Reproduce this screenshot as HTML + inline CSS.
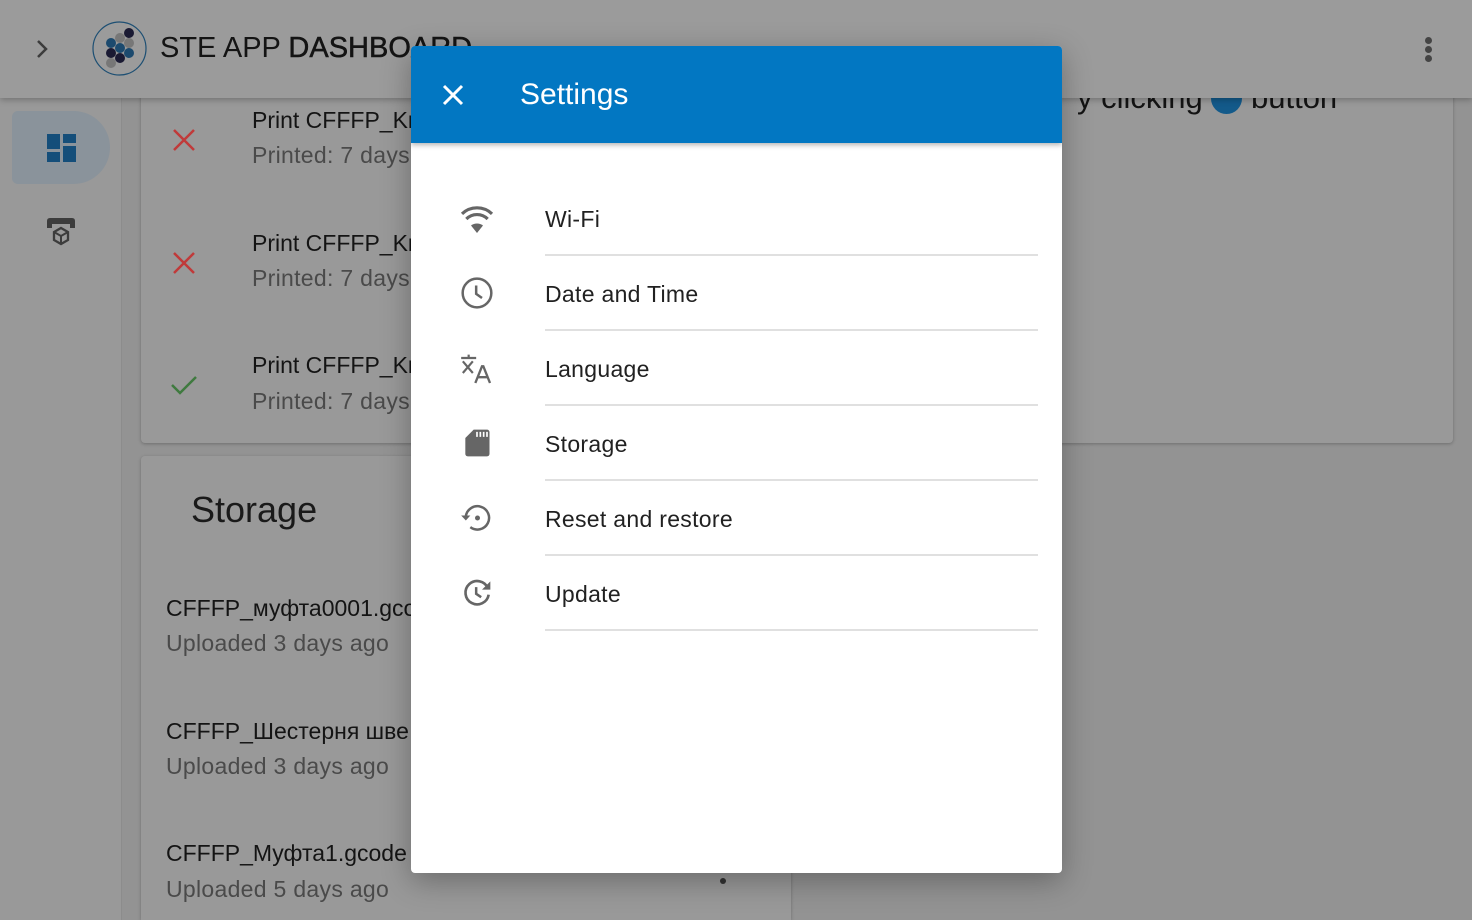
<!DOCTYPE html>
<html><head><meta charset="utf-8"><style>
*{box-sizing:border-box;margin:0;padding:0}
html,body{width:1472px;height:920px;overflow:hidden}
body{background:#939393;font-family:"Liberation Sans","DejaVu Sans",sans-serif;position:relative}
.abs{position:absolute}
.hdr{left:0;top:0;width:1472px;height:98px;background:#9b9b9b;box-shadow:0 2px 6px rgba(0,0,0,.25);z-index:3}
.side{left:0;top:98px;width:122px;height:822px;background:#999;border-right:1px solid #8c8c8c}
.card{background:#999;border-radius:4px;box-shadow:0 1px 3px rgba(0,0,0,.25)}
.t1{font-size:23px;color:#141414;white-space:nowrap}
.t2{font-size:23px;color:#4a4a4a;letter-spacing:.3px;white-space:nowrap}
.dlg{left:411px;top:46px;width:651px;height:827px;background:#fff;border-radius:4px;overflow:hidden;z-index:5;box-shadow:0 8px 30px rgba(0,0,0,.3)}
.dh{height:97px;background:#0277c2;box-shadow:0 2px 5px rgba(0,0,0,.3);position:relative}
.item{position:absolute;left:0;width:651px;height:75px}
.item .lbl{position:absolute;left:134px;top:0;font-size:23px;color:#212121;letter-spacing:.3px}
.item .ln{position:absolute;left:134px;right:24px;top:48px;height:1.5px;background:#e0e0e0}
.item svg{position:absolute;left:46px;top:-8px}
</style></head><body>
<div class="abs hdr">
  <svg class="abs" style="left:34px;top:38px" width="18" height="22" viewBox="0 0 18 22"><path d="M4 3l8 8-8 8" fill="none" stroke="#3c3c3c" stroke-width="2.5"/></svg>
  <svg class="abs" style="left:92px;top:21px" width="55" height="55" viewBox="0 0 55 55"><circle cx="27.5" cy="27.5" r="26.5" fill="none" stroke="#1d4f73" stroke-width="1.2"/>
  <g><circle cx="37" cy="12" r="5" fill="#1a1a33"/><circle cx="28" cy="17" r="5" fill="#777"/><circle cx="37" cy="22" r="5" fill="#777"/><circle cx="19" cy="22" r="5" fill="#1c4a6e"/><circle cx="28" cy="27" r="5" fill="#1c4a6e"/><circle cx="37" cy="32" r="5" fill="#1c4a6e"/><circle cx="19" cy="32" r="5" fill="#1a1a33"/><circle cx="28" cy="37" r="5" fill="#1a1a33"/><circle cx="19" cy="42" r="5" fill="#777"/></g></svg>
  <div class="abs" style="left:160px;top:32px;font-size:29px;color:#141414;white-space:nowrap">STE APP <span style="-webkit-text-stroke:.5px #141414">DASHBOARD</span></div>
  <div class="abs" style="left:1425px;top:37px;width:7px;height:7px;border-radius:50%;background:#444;box-shadow:0 9px 0 #444,0 18px 0 #444"></div>
</div>
<div class="abs side">
  <div class="abs" style="left:12px;top:13px;width:98px;height:73px;background:#8a939b;border-radius:6px 37px 37px 6px"></div>
  <svg class="abs" style="left:47px;top:36px" width="29" height="28" viewBox="0 0 29 28"><g fill="#144e7a"><rect x="0" y="0" width="13" height="15"/><rect x="16" y="0" width="13" height="9"/><rect x="0" y="18" width="13" height="10"/><rect x="16" y="12" width="13" height="16"/></g></svg>
  <svg class="abs" style="left:45px;top:118px" width="32" height="32" viewBox="0 0 32 32"><path d="M2 5q0-3 3-3h22q3 0 3 3v7h-5V8H7v4H2z" fill="#3c3c3c"/><path d="M16 12l7 4v8l-7 4-7-4v-8z" fill="none" stroke="#3c3c3c" stroke-width="2.3"/><path d="M9 16l7 4 7-4M16 20v8" fill="none" stroke="#3c3c3c" stroke-width="2"/></svg>
</div>
<div class="abs card" style="left:141px;top:60px;width:1312px;height:383px">
  <div class="abs" style="left:936px;top:20px;font-size:31px;color:#141414;white-space:nowrap">y clicking <span style="display:inline-block;width:31px;height:31px;border-radius:50%;background:#135a8a;vertical-align:-6px"></span> button</div>
</div>
<svg class="abs" style="left:172px;top:128px" width="24" height="24"><path d="M2 2l20 20M22 2L2 22" stroke="#c03a3a" stroke-width="2.5"/></svg>
<svg class="abs" style="left:172px;top:251px" width="24" height="24"><path d="M2 2l20 20M22 2L2 22" stroke="#c03a3a" stroke-width="2.5"/></svg>
<svg class="abs" style="left:170px;top:373px" width="28" height="24"><path d="M2 12l8 8L26 4" fill="none" stroke="#3f7a3f" stroke-width="2.5"/></svg>
<div class="abs t1" style="left:252px;top:107px">Print CFFFP_Kr</div>
<div class="abs t2" style="left:252px;top:142px">Printed: 7 days</div>
<div class="abs t1" style="left:252px;top:230px">Print CFFFP_Kr</div>
<div class="abs t2" style="left:252px;top:265px">Printed: 7 days</div>
<div class="abs t1" style="left:252px;top:352px">Print CFFFP_Kr</div>
<div class="abs t2" style="left:252px;top:388px">Printed: 7 days</div>
<div class="abs card" style="left:141px;top:456px;width:650px;height:464px;border-radius:4px 4px 0 0"></div>
<div class="abs" style="left:191px;top:489px;font-size:36px;color:#1a1a1a">Storage</div>
<div class="abs t1" style="left:166px;top:595px">CFFFP_муфта0001.gcode</div>
<div class="abs t2" style="left:166px;top:630px">Uploaded 3 days ago</div>
<div class="abs t1" style="left:166px;top:718px">CFFFP_Шестерня шве</div>
<div class="abs t2" style="left:166px;top:753px">Uploaded 3 days ago</div>
<div class="abs t1" style="left:166px;top:840px">CFFFP_Муфта1.gcode</div>
<div class="abs t2" style="left:166px;top:876px">Uploaded 5 days ago</div>
<div class="abs" style="left:720px;top:878px;width:6px;height:6px;border-radius:50%;background:#333"></div>
<div class="abs dlg">
  <div class="dh">
    <svg class="abs" style="left:31px;top:38px" width="22" height="22"><path d="M2 2l18 18M20 2L2 20" stroke="#fff" stroke-width="3"/></svg>
    <div class="abs" style="left:109px;top:32px;font-size:30px;color:#fff">Settings</div>
  </div>
  <div class="item" style="top:160px">
    <svg width="40" height="40" viewBox="0 0 24 24"><path d="M12 21l3.6-4.5A6 6 0 0 0 8.4 16.5z" fill="#666"/><path d="M3 9.5a13 13 0 0 1 18 0M5.6 12.6a9 9 0 0 1 12.8 0" fill="none" stroke="#666" stroke-width="1.9"/></svg>
    <div class="lbl">Wi-Fi</div><div class="ln"></div></div>
  <div class="item" style="top:235px">
    <svg width="40" height="40" viewBox="0 0 24 24"><circle cx="12" cy="12" r="8.6" fill="none" stroke="#666" stroke-width="1.5"/><path d="M11.5 7.5v5l3.5 2.5" fill="none" stroke="#666" stroke-width="1.5"/></svg>
    <div class="lbl">Date and Time</div><div class="ln"></div></div>
  <div class="item" style="top:310px">
    <svg width="40" height="40" viewBox="0 0 24 24"><path d="M2.5 6h9M7 4v2M3.5 8l6 7M9.5 8l-6 7" fill="none" stroke="#666" stroke-width="1.3"/><path d="M11 21l4-10h.8l4 10M12.5 17.5h5.8" fill="none" stroke="#666" stroke-width="1.4"/></svg>
    <div class="lbl">Language</div><div class="ln"></div></div>
  <div class="item" style="top:385px">
    <svg width="40" height="40" viewBox="0 0 24 24"><path d="M10 4h8a1.5 1.5 0 0 1 1.5 1.5v13A1.5 1.5 0 0 1 18 20H6.5A1.5 1.5 0 0 1 5 18.5V9z" fill="#666"/><path d="M12 5.3v3M14 5.3v3M16 5.3v3M18 5.3v3" stroke="#fff" stroke-width="1"/></svg>
    <div class="lbl">Storage</div><div class="ln"></div></div>
  <div class="item" style="top:460px">
    <svg width="40" height="40" viewBox="0 0 24 24"><path d="M5.3 11A7 7 0 1 1 8 17.5" fill="none" stroke="#666" stroke-width="1.5"/><path d="M2.5 10.5h5.5L5.3 13.5z" fill="#666"/><circle cx="12.3" cy="12" r="1.5" fill="#666"/></svg>
    <div class="lbl">Reset and restore</div><div class="ln"></div></div>
  <div class="item" style="top:535px">
    <svg width="40" height="40" viewBox="0 0 24 24"><path d="M18.5 9A7 7 0 1 0 19 13" fill="none" stroke="#666" stroke-width="1.6"/><path d="M20 5v5h-5z" fill="#666"/><path d="M11.5 8.5v4l3 2" fill="none" stroke="#666" stroke-width="1.5"/></svg>
    <div class="lbl">Update</div><div class="ln"></div></div>
</div>
</body></html>
